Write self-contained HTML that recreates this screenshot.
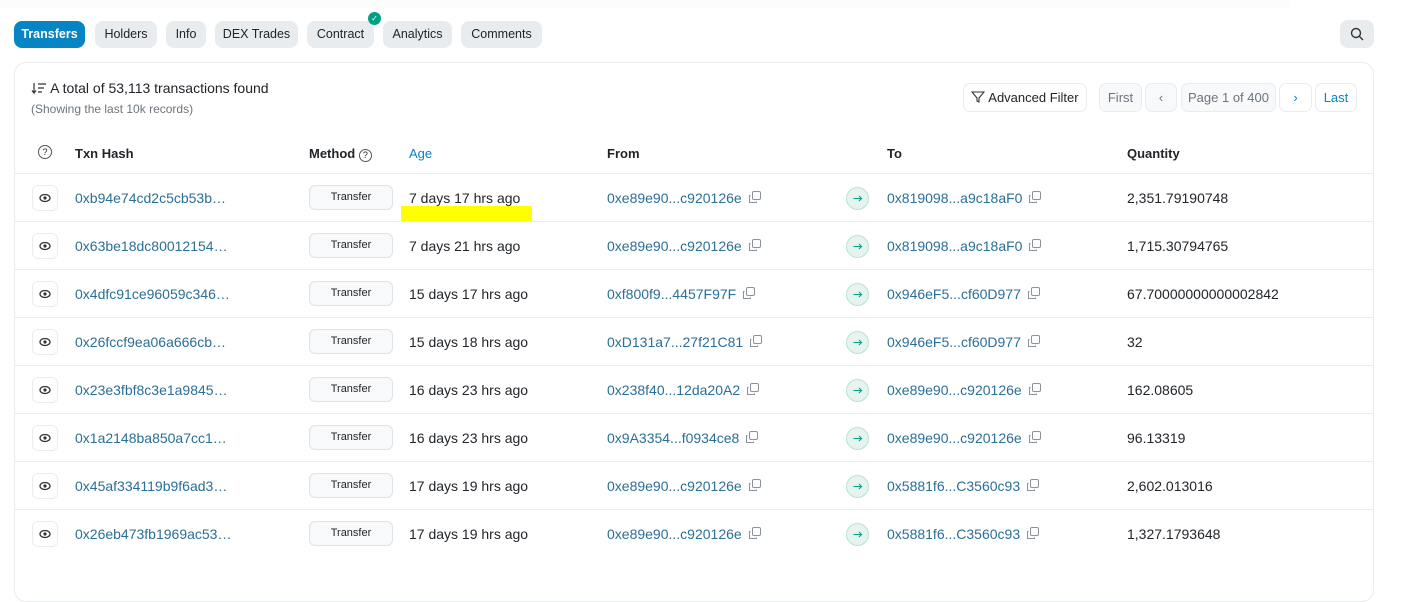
<!DOCTYPE html>
<html><head><meta charset="utf-8"><style>
*{box-sizing:border-box;margin:0;padding:0}
body{width:1414px;height:560px;background:#fff;font-family:"Liberation Sans",sans-serif;position:relative;overflow:hidden;color:#212529}
.a{position:absolute;white-space:nowrap}
.tab{position:absolute;top:21px;height:27px;border-radius:8px;background:#e9ecef;font-size:12.5px;line-height:27px;text-align:center;color:#212529}
.card{position:absolute;left:14px;top:62px;width:1360px;height:540px;border:1px solid #e9ecef;border-radius:12px}
.btn{position:absolute;border:1px solid #e9ecef;border-radius:7px;font-size:13px;line-height:27px;height:29px;text-align:center}
.row{position:absolute;left:15px;width:1358px;height:48px;border-top:1px solid #e9ecef;font-size:14px}
.row .a{top:16px}
.eye{position:absolute;left:17px;top:11px;width:26px;height:26px;border:1px solid #e9ecef;border-radius:6px}
.m{position:absolute;left:294px;top:11px;width:84px;height:25px;border:1px solid #dee2e6;border-radius:6px;background:#f8f9fa;font-size:11px;line-height:23px;text-align:center}
.lk{color:#2a6f97}
.arr{position:absolute;left:831px;top:13px;width:23px;height:23px;border-radius:50%;background:#e6f4ef;border:1px solid #b9e1d3}
.cp{display:inline-block;width:14px;height:13px;margin-left:6px;vertical-align:-1px}
.h{font-size:13px;font-weight:bold;top:146px}
</style></head><body>
<div class="a" style="left:0;top:0;width:1290px;height:8px;background:#fcfcfd"></div>
<div class="tab" style="left:14px;width:71px;background:#0784c3;color:#fff;font-weight:bold">Transfers</div>
<div class="tab" style="left:95px;width:62px">Holders</div>
<div class="tab" style="left:166px;width:40px">Info</div>
<div class="tab" style="left:215px;width:83px">DEX Trades</div>
<div class="tab" style="left:307px;width:67px">Contract</div>
<div class="a" style="left:368px;top:12px;width:13px;height:13px;border-radius:50%;background:#00a186;color:#fff;font-size:8px;line-height:13px;text-align:center">✓</div>
<div class="tab" style="left:383px;width:69px">Analytics</div>
<div class="tab" style="left:461px;width:81px">Comments</div>
<div class="tab" style="left:1340px;width:34px;top:20px;height:28px"><svg width="14" height="14" viewBox="0 0 14 14" style="margin-top:7px"><circle cx="6" cy="6" r="4.5" stroke="#333" stroke-width="1.4" fill="none"/><path d="M9.3 9.3L13 13" stroke="#333" stroke-width="1.4"/></svg></div>
<div class="card"></div>
<div class="a" style="left:31px;top:80px;font-size:14px"><svg width="16" height="12" viewBox="0 0 16 12" style="vertical-align:-1px"><path d="M3 1v10M1 8.5l2 2.5 2-2.5M7 2h8M7 6h6M7 10h4" stroke="#333" stroke-width="1.2" fill="none"/></svg> A total of 53,113 transactions found</div>
<div class="a" style="left:31px;top:102px;font-size:12px;color:#6c757d">(Showing the last 10k records)</div>
<div class="btn" style="left:963px;top:83px;width:124px"><svg width="14" height="12" viewBox="0 0 14 12" style="vertical-align:-1px"><path d="M1 1h12L8 7v4L6 10V7z" stroke="#333" stroke-width="1.1" fill="none"/></svg> Advanced Filter</div>
<div class="btn" style="left:1099px;top:83px;width:43px;background:#f8f9fa;color:#6c757d">First</div>
<div class="btn" style="left:1145px;top:83px;width:32px;background:#f8f9fa;color:#6c757d">‹</div>
<div class="btn" style="left:1181px;top:83px;width:95px;background:#f8f9fa;color:#6c757d">Page 1 of 400</div>
<div class="btn" style="left:1279px;top:83px;width:33px;color:#0784c3">›</div>
<div class="btn" style="left:1315px;top:83px;width:42px;color:#0784c3">Last</div>
<div class="a" style="left:38px;top:145px;width:14px;height:14px;border:1.2px solid #555;border-radius:50%;font-size:9px;line-height:12px;text-align:center">?</div>
<div class="a h" style="left:75px">Txn Hash</div>
<div class="a h" style="left:309px">Method <span style="font-weight:normal;border:1px solid #555;border-radius:50%;font-size:9px;display:inline-block;width:13px;height:13px;line-height:11px;text-align:center">?</span></div>
<div class="a h" style="left:409px;color:#0784c3;font-weight:normal">Age</div>
<div class="a h" style="left:607px">From</div>
<div class="a h" style="left:887px">To</div>
<div class="a h" style="left:1127px">Quantity</div>
<div id="rows"></div>
<div class="a" style="left:401px;top:206px;width:131px;height:15px;background:#ffff00"></div>
<script>
var cp='<svg class="cp" viewBox="0 0 14 13"><rect x="4.5" y="0.5" width="8" height="8" rx="1.5" fill="none" stroke="#8a939b"/><path d="M2.5 4.5h-1v7h7v-1" fill="none" stroke="#8a939b"/></svg>';
var d=[["0xb94e74cd2c5cb53b…","7 days 17 hrs ago","0xe89e90...c920126e","0x819098...a9c18aF0","2,351.79190748"],
["0x63be18dc80012154…","7 days 21 hrs ago","0xe89e90...c920126e","0x819098...a9c18aF0","1,715.30794765"],
["0x4dfc91ce96059c346…","15 days 17 hrs ago","0xf800f9...4457F97F","0x946eF5...cf60D977","67.70000000000002842"],
["0x26fccf9ea06a666cb…","15 days 18 hrs ago","0xD131a7...27f21C81","0x946eF5...cf60D977","32"],
["0x23e3fbf8c3e1a9845…","16 days 23 hrs ago","0x238f40...12da20A2","0xe89e90...c920126e","162.08605"],
["0x1a2148ba850a7cc1…","16 days 23 hrs ago","0x9A3354...f0934ce8","0xe89e90...c920126e","96.13319"],
["0x45af334119b9f6ad3…","17 days 19 hrs ago","0xe89e90...c920126e","0x5881f6...C3560c93","2,602.013016"],
["0x26eb473fb1969ac53…","17 days 19 hrs ago","0xe89e90...c920126e","0x5881f6...C3560c93","1,327.1793648"]];
var h="";d.forEach(function(r,i){h+='<div class="row" style="top:'+(173+48*i)+'px"><div class="eye"><svg width="24" height="24" viewBox="0 0 24 24"><ellipse cx="12" cy="12" rx="5" ry="3.5" fill="none" stroke="#333" stroke-width="1.3"/><circle cx="12" cy="12" r="1.6" fill="#333"/></svg></div><div class="a lk" style="left:60px">'+r[0]+'</div><div class="m">Transfer</div><div class="a" style="left:394px">'+r[1]+'</div><div class="a lk" style="left:592px">'+r[2]+cp+'</div><div class="arr"><svg width="21" height="21" viewBox="0 0 21 21"><path d="M6.5 10.5h8M12 8l2.5 2.5L12 13" stroke="#00a186" stroke-width="1.1" fill="none"/></svg></div><div class="a lk" style="left:872px">'+r[3]+cp+'</div><div class="a" style="left:1112px">'+r[4]+'</div></div>'});
document.getElementById("rows").innerHTML=h;
</script>
</body></html>
